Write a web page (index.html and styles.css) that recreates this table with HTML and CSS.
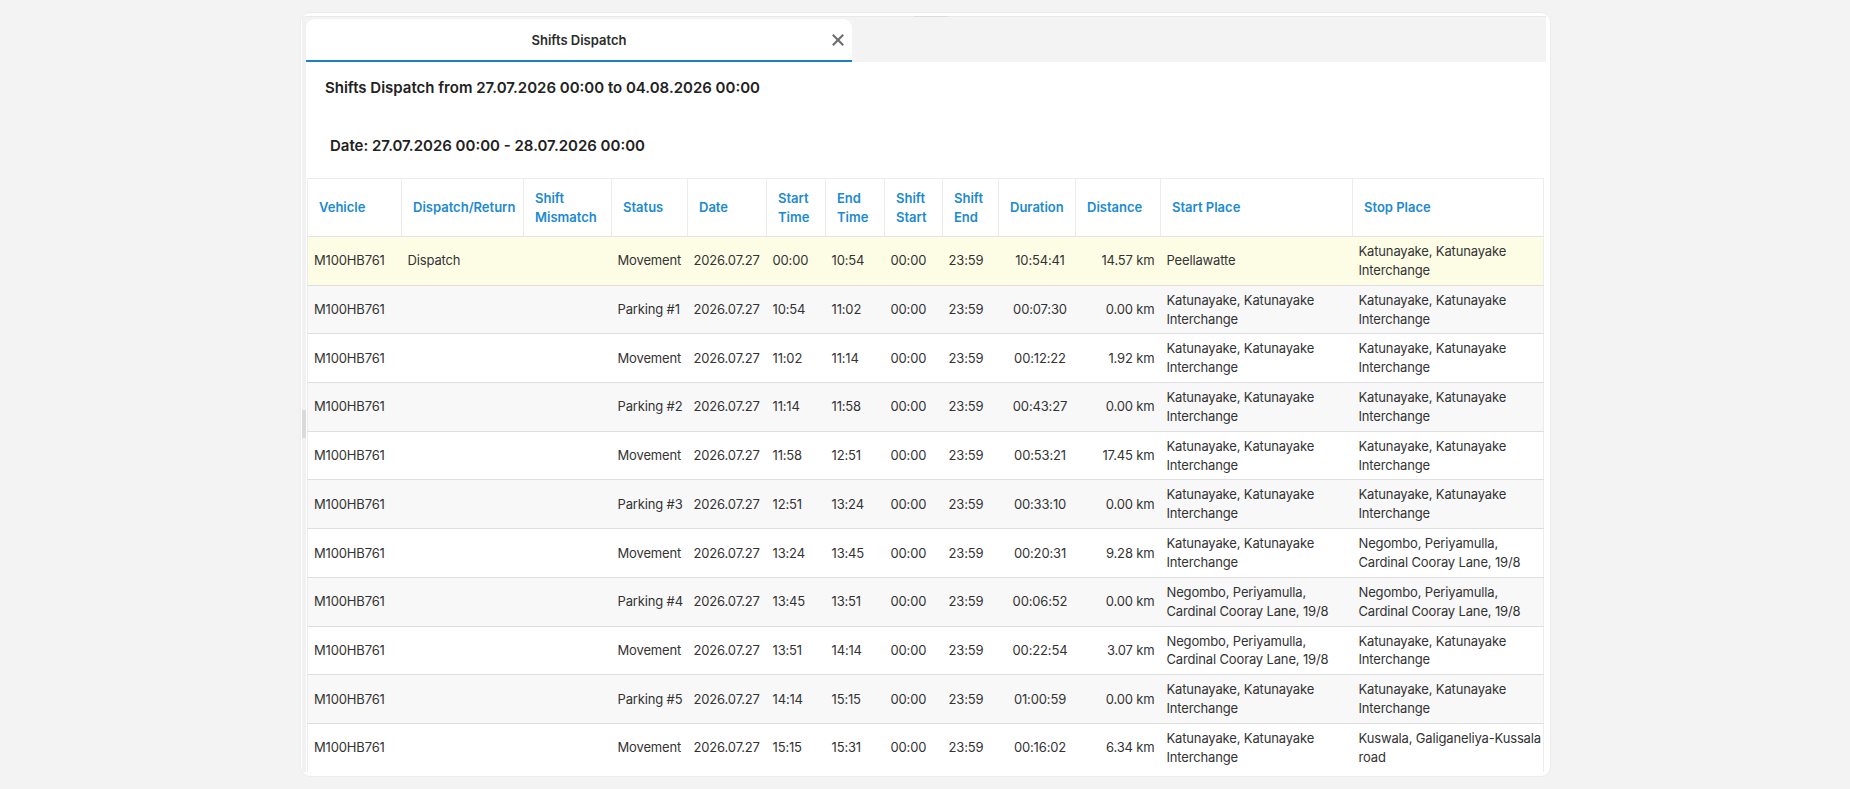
FILE: index.html
```html
<!DOCTYPE html>
<html lang="en">
<head>
<meta charset="utf-8">
<title>Shifts Dispatch</title>
<link rel="stylesheet" href="styles.css">
</head>
<body>
<div class="card">
  <div class="handle"></div>
  <div class="card-inner">
    <div class="strip"><div class="thumb"></div></div>
    <div class="panel">
      <div class="tabbar">
        <div class="tab">
          <span></span>
          <span class="tab-title">Shifts Dispatch</span>
          <span class="tab-close">
            <svg width="12" height="12" viewBox="0 0 12 12"><path d="M1.5 1.5 L10.5 10.5 M10.5 1.5 L1.5 10.5" stroke="#6b6b6b" stroke-width="2" stroke-linecap="square" fill="none"/></svg>
          </span>
        </div>
      </div>
      <div class="content">
        <h1 class="title">Shifts Dispatch from 27.07.2026 00:00 to 04.08.2026 00:00</h1>
        <h2 class="date">Date: 27.07.2026 00:00 - 28.07.2026 00:00</h2>
        <div class="table-wrap">
          <table class="grid">
            <colgroup>
              <col style="width:94px"><col style="width:122px"><col style="width:88px"><col style="width:76px"><col style="width:79px"><col style="width:59px"><col style="width:59px"><col style="width:58px"><col style="width:56px"><col style="width:77px"><col style="width:85px"><col style="width:192px"><col style="width:191px">
            </colgroup>
            <thead>
              <tr>
                <th>Vehicle</th><th>Dispatch/Return</th><th>Shift Mismatch</th><th>Status</th><th>Date</th><th>Start Time</th><th>End Time</th><th>Shift Start</th><th>Shift End</th><th>Duration</th><th>Distance</th><th>Start Place</th><th>Stop Place</th>
              </tr>
            </thead>
            <tbody>
              <tr class="selected"><td>M100HB761</td><td>Dispatch</td><td></td><td>Movement</td><td>2026.07.27</td><td>00:00</td><td>10:54</td><td>00:00</td><td>23:59</td><td class="c">10:54:41</td><td class="r">14.57 km</td><td class="place">Peellawatte</td><td class="place last">Katunayake, Katunayake Interchange</td></tr>
              <tr><td>M100HB761</td><td></td><td></td><td>Parking #1</td><td>2026.07.27</td><td>10:54</td><td>11:02</td><td>00:00</td><td>23:59</td><td class="c">00:07:30</td><td class="r">0.00 km</td><td class="place">Katunayake, Katunayake Interchange</td><td class="place last">Katunayake, Katunayake Interchange</td></tr>
              <tr><td>M100HB761</td><td></td><td></td><td>Movement</td><td>2026.07.27</td><td>11:02</td><td>11:14</td><td>00:00</td><td>23:59</td><td class="c">00:12:22</td><td class="r">1.92 km</td><td class="place">Katunayake, Katunayake Interchange</td><td class="place last">Katunayake, Katunayake Interchange</td></tr>
              <tr><td>M100HB761</td><td></td><td></td><td>Parking #2</td><td>2026.07.27</td><td>11:14</td><td>11:58</td><td>00:00</td><td>23:59</td><td class="c">00:43:27</td><td class="r">0.00 km</td><td class="place">Katunayake, Katunayake Interchange</td><td class="place last">Katunayake, Katunayake Interchange</td></tr>
              <tr><td>M100HB761</td><td></td><td></td><td>Movement</td><td>2026.07.27</td><td>11:58</td><td>12:51</td><td>00:00</td><td>23:59</td><td class="c">00:53:21</td><td class="r">17.45 km</td><td class="place">Katunayake, Katunayake Interchange</td><td class="place last">Katunayake, Katunayake Interchange</td></tr>
              <tr><td>M100HB761</td><td></td><td></td><td>Parking #3</td><td>2026.07.27</td><td>12:51</td><td>13:24</td><td>00:00</td><td>23:59</td><td class="c">00:33:10</td><td class="r">0.00 km</td><td class="place">Katunayake, Katunayake Interchange</td><td class="place last">Katunayake, Katunayake Interchange</td></tr>
              <tr><td>M100HB761</td><td></td><td></td><td>Movement</td><td>2026.07.27</td><td>13:24</td><td>13:45</td><td>00:00</td><td>23:59</td><td class="c">00:20:31</td><td class="r">9.28 km</td><td class="place">Katunayake, Katunayake Interchange</td><td class="place last">Negombo, Periyamulla, Cardinal Cooray Lane, 19/8</td></tr>
              <tr><td>M100HB761</td><td></td><td></td><td>Parking #4</td><td>2026.07.27</td><td>13:45</td><td>13:51</td><td>00:00</td><td>23:59</td><td class="c">00:06:52</td><td class="r">0.00 km</td><td class="place">Negombo, Periyamulla, Cardinal Cooray Lane, 19/8</td><td class="place last">Negombo, Periyamulla, Cardinal Cooray Lane, 19/8</td></tr>
              <tr><td>M100HB761</td><td></td><td></td><td>Movement</td><td>2026.07.27</td><td>13:51</td><td>14:14</td><td>00:00</td><td>23:59</td><td class="c">00:22:54</td><td class="r">3.07 km</td><td class="place">Negombo, Periyamulla, Cardinal Cooray Lane, 19/8</td><td class="place last">Katunayake, Katunayake Interchange</td></tr>
              <tr><td>M100HB761</td><td></td><td></td><td>Parking #5</td><td>2026.07.27</td><td>14:14</td><td>15:15</td><td>00:00</td><td>23:59</td><td class="c">01:00:59</td><td class="r">0.00 km</td><td class="place">Katunayake, Katunayake Interchange</td><td class="place last">Katunayake, Katunayake Interchange</td></tr>
              <tr><td>M100HB761</td><td></td><td></td><td>Movement</td><td>2026.07.27</td><td>15:15</td><td>15:31</td><td>00:00</td><td>23:59</td><td class="c">00:16:02</td><td class="r">6.34 km</td><td class="place">Katunayake, Katunayake Interchange</td><td class="place last">Kuswala, Galiganeliya-Kussala road</td></tr>
            </tbody>
          </table>
        </div>
      </div>
    </div>
  </div>
</div>
</body>
</html>
```

FILE: styles.css
```css
* { box-sizing: border-box; }

html, body {
  margin: 0;
  padding: 0;
}

body {
  background: #f3f3f3;
  font-family: Inter, "Noto Sans", "Liberation Sans", sans-serif;
  color: #333;
  overflow: hidden;
}

.card {
  position: relative;
  width: 1251px;
  height: 765px;
  margin: 12px 0 0 300px;
  background: #fff;
  border: 1px solid #ececec;
  border-radius: 10px;
  padding: 3px 4px 4px 1px;
}

.handle {
  position: absolute;
  top: 3px;
  left: 613px;
  width: 34px;
  height: 1px;
  background: #dcdcdc;
}

.card-inner {
  display: flex;
  height: 100%;
}

.strip {
  width: 4px;
  flex: none;
  background: #f1f1f1;
}

.thumb {
  margin-top: 394px;
  height: 28px;
  background: #dadada;
}

.panel {
  flex: 1;
  min-width: 0;
  border-top: 1px solid #e9e9e9;
  overflow: hidden;
  display: flex;
  flex-direction: column;
}

.tabbar {
  background: #f3f3f3;
  height: 45px;
  padding-top: 2px;
  flex: none;
}

.tab {
  width: 546px;
  height: 43px;
  background: #fff;
  border-radius: 9px 9px 0 0;
  border-bottom: 2px solid #1b80c4;
  display: grid;
  grid-template-columns: 1fr auto 1fr;
  align-items: center;
}

.tab-title {
  font-size: 13px;
  font-weight: 600;
  color: #2b2b2b;
}

.tab-close {
  justify-self: end;
  margin-right: 8px;
  display: flex;
  align-items: center;
}

.content {
  padding-top: 16px;
}

.title {
  margin: 0 0 0 19px;
  font-size: 15px;
  line-height: 20px;
  font-weight: 600;
  color: #222;
}

.date {
  margin: 38px 0 0 24px;
  font-size: 15px;
  line-height: 20px;
  font-weight: 600;
  color: #222;
}

.table-wrap {
  margin: 22px 3px 0 1px;
}

.grid {
  width: 1236px;
  table-layout: fixed;
  border-collapse: collapse;
  font-size: 13px;
  border-left: 1px solid #ececec;
  border-right: 1px solid #ececec;
}

.grid th {
  height: 58px;
  padding: 0 6px 0 11px;
  text-align: left;
  vertical-align: middle;
  font-weight: 600;
  line-height: 19px;
  color: #1c8ad2;
  background: #fff;
  border: 1px solid #ececec;
  border-bottom-color: #e3e3e3;
}

.grid td {
  padding: 5px 6px;
  line-height: 18.85px;
  letter-spacing: -0.15px;
  vertical-align: middle;
  color: #333;
  white-space: nowrap;
  border-bottom: 1px solid #dedede;
}

.grid td.place { white-space: normal; }
.grid td.last { padding-right: 1px; }
.grid td.c { text-align: center; padding-left: 12px; }
.grid td.r { text-align: right; }

.grid tbody tr:nth-child(even) td { background: #f8f8f8; }
.grid tbody tr.selected td { background: #fdfde6; }
```
